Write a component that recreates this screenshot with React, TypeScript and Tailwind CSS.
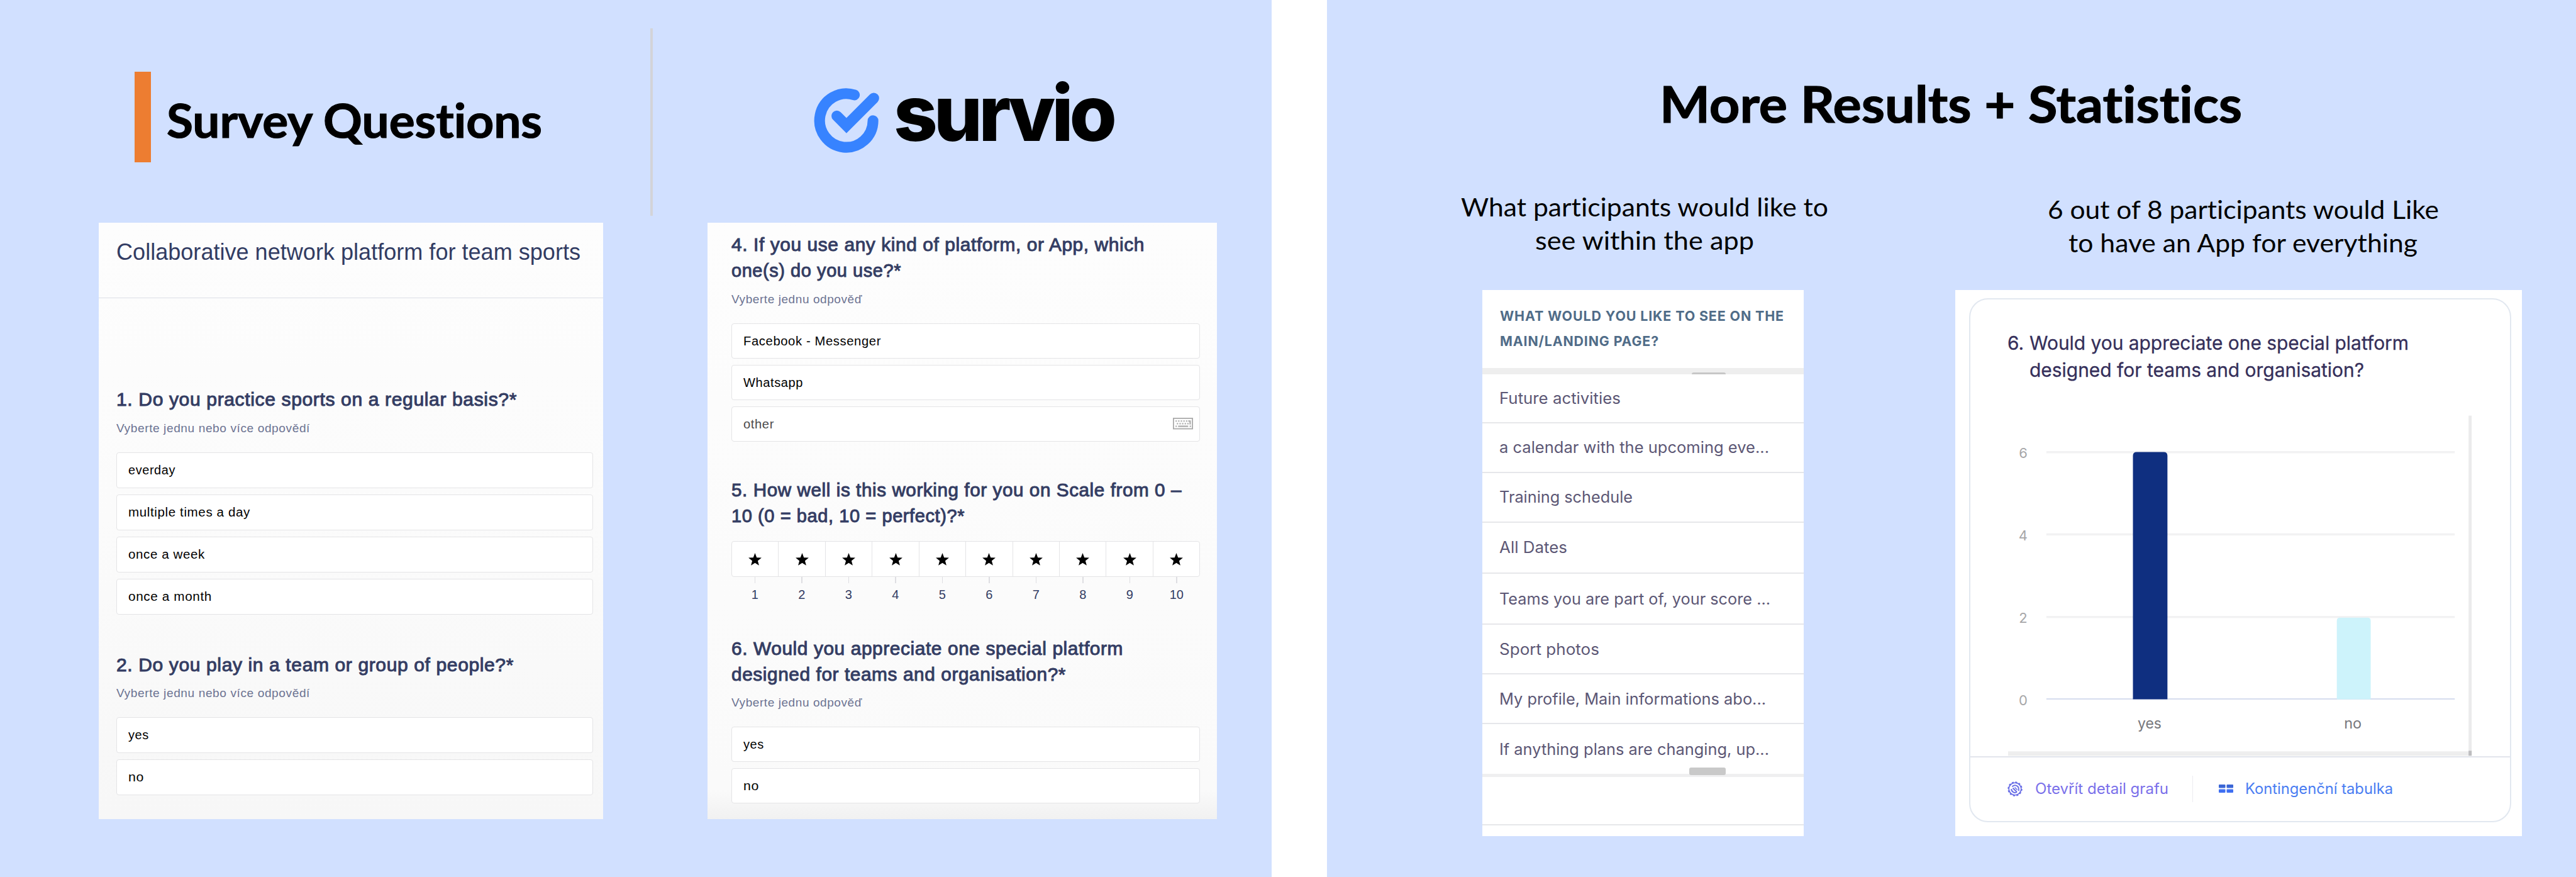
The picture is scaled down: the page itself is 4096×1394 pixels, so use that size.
import { useLayoutEffect, useRef, type ReactNode } from "react";

/** One line of text, stretched horizontally so that it spans its box. */
function Line({ children, className }: { children: ReactNode; className: string }) {
  const box = useRef<HTMLDivElement>(null);
  const text = useRef<HTMLSpanElement>(null);
  useLayoutEffect(() => {
    if (!box.current || !text.current) return;
    text.current.style.transform = "none";
    const natural = text.current.getBoundingClientRect().width;
    const wanted = box.current.getBoundingClientRect().width;
    text.current.style.transform = `scaleX(${wanted / natural})`;
  });
  return (
    <div ref={box} className={`shrink-0 whitespace-nowrap ${className}`}>
      <span ref={text} className="inline-block origin-left">
        {children}
      </span>
    </div>
  );
}

type Row = { text: string; w: string };

function Question({ lines, hint }: { lines: Row[]; hint?: Row }) {
  return (
    <div className="font-['Liberation_Sans',sans-serif]">
      {lines.map((l) => (
        <Line
          key={l.text}
          className={`relative -top-px text-[30px] leading-[41px] tracking-[0.02em] text-[#343d63] [-webkit-text-stroke:1px_#343d63] ${l.w}`}
        >
          {l.text}
        </Line>
      ))}
      {hint && (
        <Line className={`mt-[12.5px] text-[19px] leading-6 tracking-[0.03em] text-[#6c7392] ${hint.w}`}>
          {hint.text}
        </Line>
      )}
    </div>
  );
}

function Keyboard() {
  const dots = [
    [8, 8], [15, 8], [22, 8], [29, 8], [36, 8],
    [11.5, 15], [18.5, 15], [25.5, 15], [32.5, 15], [39.5, 15],
    [8, 22], [46, 22],
  ];
  return (
    <svg viewBox="0 0 54 31" className="h-[18.5px] w-8" fill="#a9a9a9">
      <rect x="1.5" y="1.5" width="51" height="28" fill="none" stroke="#a9a9a9" strokeWidth="3" />
      {dots.map(([x, y]) => (
        <rect key={`${x}-${y}`} x={x - 1} y={y - 1} width="3.6" height="3.6" />
      ))}
      <path d="M41 7h7v11h-3.6v-7.4H41z" />
      <rect x="14" y="21" width="27" height="3.6" />
    </svg>
  );
}

function Options({ items, size }: { items: (Row & { other?: boolean })[]; size: string }) {
  return (
    <div className="mt-[25.7px] flex flex-col gap-[10px] font-['Liberation_Sans',sans-serif]">
      {items.map((o) => (
        <div
          key={o.text}
          className={`flex items-center justify-between rounded-[4px] border-[1.5px] border-[#e4e4e6] bg-white pr-[10px] pl-[18px] ${size}`}
        >
          <Line
            className={`text-[19.5px] leading-6 tracking-[0.03em] ${o.other ? "text-[#4a4a4a]" : "text-black"} ${o.w}`}
          >
            {o.text}
          </Line>
          {o.other && <Keyboard />}
        </div>
      ))}
    </div>
  );
}

function Star() {
  return (
    <svg viewBox="0 0 20 20" className="h-[21px] w-[21px]">
      <path
        d="M10 0l2.6 6.8 7.3.4-5.7 4.6 1.9 7.1L10 14.9l-6.1 4 1.9-7.1L.1 7.2l7.3-.4z"
        fill="#000"
      />
    </svg>
  );
}

function Rating() {
  return (
    <div className="mt-[19px] w-[745px] font-['Liberation_Sans',sans-serif]">
      <div className="flex h-[57px] rounded-[4px] border-[1.5px] border-[#e4e4e6] bg-white">
        {Array.from({ length: 10 }, (_, i) => (
          <div
            key={i}
            className="flex flex-1 items-center justify-center border-r-[1.5px] border-[#e4e4e6] pt-[2px] last:border-r-0"
          >
            <Star />
          </div>
        ))}
      </div>
      <div className="flex">
        {Array.from({ length: 10 }, (_, i) => (
          <div key={i} className="flex flex-1 flex-col items-center text-[20px] leading-6 text-[#323c63]">
            <div className="mb-[6px] h-[10px] w-[1.5px] bg-[#dedee2]" />
            {i + 1}
          </div>
        ))}
      </div>
    </div>
  );
}

function SurvioMark() {
  return (
    <svg viewBox="40 115 530 530" className="mt-[137.7px] ml-[255px] h-[106.6px] w-[106.6px] shrink-0">
      <g fill="none" stroke="#3783ff" strokeLinecap="round" strokeWidth="85">
        <path d="M513 382A211 212 0 1 1 366 179" />
        <path d="M227 345L303 421L519 205" />
      </g>
    </svg>
  );
}

function SurveySlide() {
  return (
    <section className="h-full w-[2022px] shrink-0 bg-[#d1e0ff]">
      <header className="flex h-[354.4px] items-start">
        <div className="mt-[113.7px] ml-[213.6px] h-[144px] w-[26.5px] shrink-0 bg-[#ed7d31]" />
        <Line className="mt-[147.4px] ml-[25px] w-[597px] font-['Lato',sans-serif] text-[74px] leading-[88px] font-bold text-black [-webkit-text-stroke:1.2px_#000] [font-variant-ligatures:none]">
          Survey Questions
        </Line>
        <div className="mt-[45px] ml-[171.9px] h-[298px] w-1 shrink-0 bg-[#d3d4d9]" />
        <SurvioMark />
        <Line className="mt-[105.2px] ml-[21px] w-[349px] font-['Inter',sans-serif] text-[123px] leading-[150px] font-extrabold tracking-[-0.05em] text-black">
          survio
        </Line>
      </header>

      <div className="flex pl-[156.6px]">
        <article className="h-[947.6px] w-[802px] shrink-0 bg-gradient-to-b from-[#fdfdfd] via-[#fbfbfb] to-[#f7f7f7]">
          <div className="h-[120px] border-b-[1.5px] border-[#dcdee6] pt-[25px] pl-[28px]">
            <Line className="w-[738px] font-['Liberation_Sans',sans-serif] text-[36px] leading-[44px] text-[#323c63]">
              Collaborative network platform for team sports
            </Line>
          </div>
          <div className="pt-[141px] pl-[28.6px]">
            <Question
              lines={[{ text: "1. Do you practice sports on a regular basis?*", w: "w-[637px]" }]}
              hint={{ text: "Vyberte jednu nebo více odpovědí", w: "w-[308px]" }}
            />
            <Options
              size="h-[57.1px] w-[758px]"
              items={[
                { text: "everday", w: "w-[75px]" },
                { text: "multiple times a day", w: "w-[194px]" },
                { text: "once a week", w: "w-[122px]" },
                { text: "once a month", w: "w-[133px]" },
              ]}
            />
            <div className="h-[59.7px]" />
            <Question
              lines={[{ text: "2. Do you play in a team or group of people?*", w: "w-[632px]" }]}
              hint={{ text: "Vyberte jednu nebo více odpovědí", w: "w-[308px]" }}
            />
            <Options
              size="h-[57.1px] w-[758px]"
              items={[
                { text: "yes", w: "w-[33px]" },
                { text: "no", w: "w-[25px]" },
              ]}
            />
          </div>
        </article>

        <article className="ml-[166.3px] h-[947.6px] w-[810.4px] shrink-0 bg-gradient-to-b from-[#fdfdfd] via-[#fafafa] via-95% to-[#f1f1f1] pt-[15px] pl-[38.2px]">
          <Question
            lines={[
              { text: "4. If you use any kind of platform, or App, which", w: "w-[657px]" },
              { text: "one(s) do you use?*", w: "w-[270px]" },
            ]}
            hint={{ text: "Vyberte jednu odpověď", w: "w-[208px]" }}
          />
          <Options
            size="h-[56px] w-[745px]"
            items={[
              { text: "Facebook - Messenger", w: "w-[219px]" },
              { text: "Whatsapp", w: "w-[95px]" },
              { text: "other", w: "w-[49px]", other: true },
            ]}
          />
          <div className="h-[57px]" />
          <Question
            lines={[
              { text: "5. How well is this working for you on Scale from 0 –", w: "w-[716px]" },
              { text: "10 (0 = bad, 10 = perfect)?*", w: "w-[371px]" },
            ]}
          />
          <Rating />
          <div className="h-[54px]" />
          <Question
            lines={[
              { text: "6. Would you appreciate one special platform", w: "w-[623px]" },
              { text: "designed for teams and organisation?*", w: "w-[532px]" },
            ]}
            hint={{ text: "Vyberte jednu odpověď", w: "w-[208px]" }}
          />
          <Options
            size="h-[56px] w-[745px]"
            items={[
              { text: "yes", w: "w-[33px]" },
              { text: "no", w: "w-[25px]" },
            ]}
          />
        </article>
      </div>
    </section>
  );
}

const answers = [
  { text: "Future activities", w: "w-[193px]", h: "h-[78px] border-b-2" },
  { text: "a calendar with the upcoming eve...", w: "w-[429px]", h: "h-[79px] border-b-2" },
  { text: "Training schedule", w: "w-[212px]", h: "h-[79px] border-b-2" },
  { text: "All Dates", w: "w-[108px]", h: "h-[81.4px] border-b-2" },
  { text: "Teams you are part of, your score ...", w: "w-[431px]", h: "h-[81.4px] border-b-2" },
  { text: "Sport photos", w: "w-[159px]", h: "h-[79px] border-b-2" },
  { text: "My profile, Main informations abo...", w: "w-[424px]", h: "h-[79px] border-b-2" },
  { text: "If anything plans are changing, up...", w: "w-[429px]", h: "h-[78.8px]" },
];

function AnswerTable() {
  return (
    <article className="h-[868.4px] w-[511.2px] bg-white font-['Inter',sans-serif]">
      <div className="h-[124.6px] pt-[22.7px] pl-[27.5px] text-[22px] leading-[39.8px] font-bold tracking-[0.04em] text-[#506c88]">
        <Line className="w-[452px]">WHAT WOULD YOU LIKE TO SEE ON THE</Line>
        <Line className="w-[253px]">MAIN/LANDING PAGE?</Line>
      </div>
      <div className="flex h-[9.3px] items-end bg-[#eeeeee]">
        <div className="ml-[333px] h-[3px] w-[54px] rounded-t bg-[#c6c6c6]" />
      </div>
      {answers.map((a) => (
        <div
          key={a.text}
          className={`flex items-center border-[#e6e7ea] pl-[26.5px] text-[25px] leading-8 text-[#5c5775] ${a.h}`}
        >
          <Line className={a.w}>{a.text}</Line>
        </div>
      ))}
      <div className="relative h-[5px] bg-[#efeff0]">
        <div className="absolute bottom-[3px] left-[329px] h-[12.5px] w-[58px] rounded-[3px] bg-[#c9c9c9]" />
      </div>
      <div className="h-[77px] border-b-2 border-[#e6e7ea]" />
    </article>
  );
}

const ticks = [
  { value: 6, y: 78 },
  { value: 4, y: 209 },
  { value: 2, y: 340.6 },
  { value: 0, y: 472 },
];

function BarChart() {
  return (
    <svg viewBox="0 0 800 562" className="mt-[30.4px] h-[562px] w-[800px] font-['Inter',sans-serif]">
      {ticks.map((t) => (
        <g key={t.value}>
          <rect
            x="61"
            y={t.y - 1.5}
            width="651"
            height={t.value ? 3.5 : 2}
            fill={t.value ? "#f2f2f3" : "#d6dcee"}
          />
          <text x="24" y={t.y + 9.7} textAnchor="middle" fontSize="22" fill="#a6a6a8">
            {t.value}
          </text>
        </g>
      ))}
      <path d="M199 472V84q0-6 6-6h43q6 0 6 6v388z" fill="#0f2f80" />
      <path d="M524 472V347q0-5 5-5h44q5 0 5 5v125z" fill="#cdf3fb" />
      <text x="225.5" y="518.5" textAnchor="middle" fontSize="23" fill="#77777c" textLength="38" lengthAdjust="spacingAndGlyphs">
        yes
      </text>
      <text x="549.5" y="518.5" textAnchor="middle" fontSize="23" fill="#77777c" textLength="28" lengthAdjust="spacingAndGlyphs">
        no
      </text>
      <rect x="734" y="20" width="5" height="541" fill="#ebebec" />
      <rect x="0" y="555" width="734" height="7" fill="#eeeeee" />
      <rect x="734" y="554" width="5" height="8" fill="#bdbdbf" />
    </svg>
  );
}

function DetailIcon() {
  return (
    <svg viewBox="0 0 24 24" className="h-[24px] w-[24px]" fill="none" stroke="#6a6fe6" strokeWidth="2">
      <circle cx="12" cy="12" r="9.8" strokeWidth="1.6" />
      <circle cx="12" cy="12" r="10.4" strokeDasharray="3 2.45" strokeWidth="2.6" />
      <path d="M7.5 8.5A5.8 5.8 0 0 1 17.8 12v3M6.2 12A5.8 5.8 0 0 0 15 17" />
      <path d="M8.5 10.5l6.5 6.5" strokeWidth="2" />
      <path d="M11.5 9.5l4 4" strokeWidth="1.6" />
    </svg>
  );
}

function TableIcon() {
  return (
    <svg viewBox="0 0 23 13" className="h-[13px] w-[23px]">
      <rect x="0" y="0" width="10.5" height="5.5" rx="1" fill="#3b66d6" />
      <rect x="12.5" y="0" width="10.5" height="5.5" rx="1" fill="#3b66d6" />
      <rect x="0" y="7.5" width="10.5" height="5.5" rx="1" fill="#3f6ff2" />
      <rect x="12.5" y="7.5" width="10.5" height="5.5" rx="1" fill="#3f6ff2" />
    </svg>
  );
}

function ChartCard() {
  return (
    <article className="h-[868.4px] w-[900.5px] bg-white pt-[13px] pl-[21.7px] font-['Inter',sans-serif]">
      <div className="h-[833px] w-[862px] rounded-[30px] border-2 border-[#e2e8f0] pt-[48.5px]">
        <div className="flex pl-[59.5px] text-[30px] leading-[42.7px] text-[#352f5a] [-webkit-text-stroke:0.3px_#352f5a]">
          <Line className="w-[26px]">6.</Line>
          <div className="pl-[8.5px]">
            <Line className="w-[603px]">Would you appreciate one special platform</Line>
            <Line className="w-[532px]">designed for teams and organisation?</Line>
          </div>
        </div>
        <div className="flex pl-[60px]">
          <BarChart />
        </div>
        <footer className="flex h-[102px] items-center border-t-2 border-[#e2e5ec] pl-[59.5px] text-[24px] leading-8">
          <DetailIcon />
          <Line className="ml-[19.5px] w-[212px] text-[#7a70ea]">Otevřít detail grafu</Line>
          <div className="ml-[38px] h-[42px] w-[1.5px] bg-[#ececf0]" />
          <div className="ml-[41px]">
            <TableIcon />
          </div>
          <Line className="ml-[19px] w-[235px] text-[#4a7df2]">Kontingenční tabulka</Line>
        </footer>
      </div>
    </article>
  );
}

function ResultsSlide() {
  return (
    <section className="h-full grow bg-[#d1e0ff] font-['Lato',sans-serif] text-black [font-variant-ligatures:none]">
      <Line className="ml-[529px] box-content h-[186px] w-[926px] pt-[116px] text-[81px] leading-[96px] font-bold [-webkit-text-stroke:1.2px_#000]">
        More Results + Statistics
      </Line>
      <div className="flex pl-[213px]">
        <div>
          <div className="flex h-[158.7px] flex-col items-center text-[41px] leading-[53.2px]">
            <Line className="w-[584px]">What participants would like to</Line>
            <Line className="w-[348px]">see within the app</Line>
          </div>
          <div className="pl-[34px]">
            <AnswerTable />
          </div>
        </div>
        <div className="ml-[202.3px]">
          <div className="flex h-[158.7px] flex-col items-center pt-[4px] pl-[14px] text-[41px] leading-[53.4px]">
            <Line className="w-[622px]">6 out of 8 participants would Like</Line>
            <Line className="w-[555px]">to have an App for everything</Line>
          </div>
          <ChartCard />
        </div>
      </div>
    </section>
  );
}

export default function App() {
  return (
    <main className="flex h-[1394px] w-[4096px] gap-[88px] overflow-hidden bg-white">
      <SurveySlide />
      <ResultsSlide />
    </main>
  );
}
